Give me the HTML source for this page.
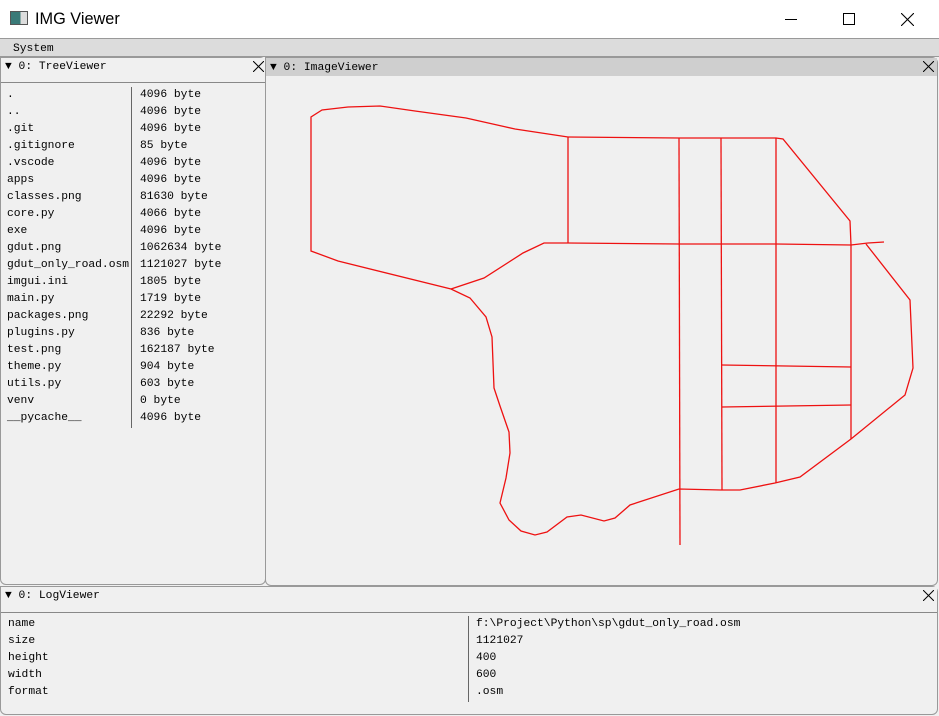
<!DOCTYPE html>
<html><head><style>
*{margin:0;padding:0;box-sizing:border-box}
body{width:939px;height:716px;background:#f0f0f0;position:relative;overflow:hidden;font-family:"Liberation Mono",monospace;font-size:11.3px;color:#000}
.abs{position:absolute}
.title{left:0;top:0;width:939px;height:38px;background:#fff;font-family:"Liberation Sans",sans-serif;font-size:16.3px}
.menu{left:0;top:38px;width:939px;height:19px;background:#dcdcdc;border-top:1px solid #999;border-bottom:1px solid #999}
.win{border:1px solid #999;background:#f0f0f0;border-radius:0 6px 6px 6px}
.hdr{position:absolute;left:0;top:0;right:0;height:18px;line-height:18px;padding-left:4px;white-space:pre}
.row{position:absolute;white-space:pre;line-height:17px}
</style></head><body>
<div class="abs title">
  <div class="abs" style="left:10px;top:11px;width:18px;height:14px;border:1px solid #555;background:linear-gradient(90deg,#3a7a78 0 60%,#ddd 60%)"></div>
  <div class="abs" style="left:35px;top:10px">IMG Viewer</div>
  <div class="abs" style="left:785px;top:19px;width:12px;height:1px;background:#000"></div>
  <div class="abs" style="left:843px;top:13px;width:12px;height:12px;border:1px solid #000"></div>
  <svg class="abs" style="left:901px;top:13px" width="13" height="13"><path d="M0 0L13 13M13 0L0 13" stroke="#000" stroke-width="1.1"/></svg>
</div>
<div class="abs menu"><div class="abs" style="left:13px;top:2px;line-height:16px">System</div></div>

<div class="abs win" style="left:0;top:57px;width:266px;height:528px">
  <div class="hdr" style="background:#f0f0f0;height:25px;border-bottom:1px solid #888;line-height:17px;padding-top:1px">▼ 0: TreeViewer</div>
  <svg class="abs" style="left:252px;top:3px" width="11" height="11"><path d="M0 0L11 11M11 0L0 11" stroke="#000"/></svg>
  <div class="abs" style="left:130px;top:29px;width:1px;height:341px;background:#666"></div>
  <div class="row" style="left:6px;top:29px">.
..
.git
.gitignore
.vscode
apps
classes.png
core.py
exe
gdut.png
gdut_only_road.osm
imgui.ini
main.py
packages.png
plugins.py
test.png
theme.py
utils.py
venv
__pycache__</div>
  <div class="row" style="left:139px;top:29px">4096 byte
4096 byte
4096 byte
85 byte
4096 byte
4096 byte
81630 byte
4066 byte
4096 byte
1062634 byte
1121027 byte
1805 byte
1719 byte
22292 byte
836 byte
162187 byte
904 byte
603 byte
0 byte
4096 byte</div>
</div>

<div class="abs win" style="left:265px;top:57px;width:673px;height:529px">
  <div class="hdr" style="background:#cfcfcf;line-height:18px;padding-top:1px">▼ 0: ImageViewer</div>
  <svg class="abs" style="left:657px;top:3px" width="11" height="11"><path d="M0 0L11 11M11 0L0 11" stroke="#000"/></svg>
</div>
<svg class="abs" style="left:0;top:0" width="939" height="716" fill="none" stroke="#ee1111" stroke-width="1.3">
<polyline points="568,137 515,129 466,118 415,111 380,106 348,107 322,110 311,117 311,251 338,261 451,289 470,298 486,317 492,337 494,388 500,406 509,432 510,453 506,478 500,503 509,520 521,531 535,535 547,532 567,517 581,515 604,521 615,518 630,505 679,489 721,490 740,490 775,483 800,477 851,439 905,395 913,368 910,300 866,244"/>
<polyline points="568,137 679,138 721,138 776,138 783,139 850,221 851,245 851,439"/>
<polyline points="451,289 484,278 523,253 544,243 568,243 679,244 721,244 776,244 851,245 868,243 884,242"/>
<line x1="568" y1="137" x2="568" y2="243"/>
<line x1="679" y1="138" x2="680" y2="545"/>
<line x1="721" y1="138" x2="722" y2="490"/>
<line x1="776" y1="138" x2="776" y2="483"/>
<polyline points="722,365 851,367"/>
<polyline points="722,407 851,405"/>
</svg>

<div class="abs win" style="left:0;top:586px;width:938px;height:129px">
  <div class="hdr" style="background:#f0f0f0;height:26px;border-bottom:1px solid #888;line-height:17px;padding-top:1px">▼ 0: LogViewer</div>
  <svg class="abs" style="left:922px;top:3px" width="11" height="11"><path d="M0 0L11 11M11 0L0 11" stroke="#000"/></svg>
  <div class="abs" style="left:467px;top:29px;width:1px;height:86px;background:#666"></div>
  <div class="row" style="left:7px;top:29px">name
size
height
width
format</div>
  <div class="row" style="left:475px;top:29px">f:\Project\Python\sp\gdut_only_road.osm
1121027
400
600
.osm</div>
</div>
</body></html>
